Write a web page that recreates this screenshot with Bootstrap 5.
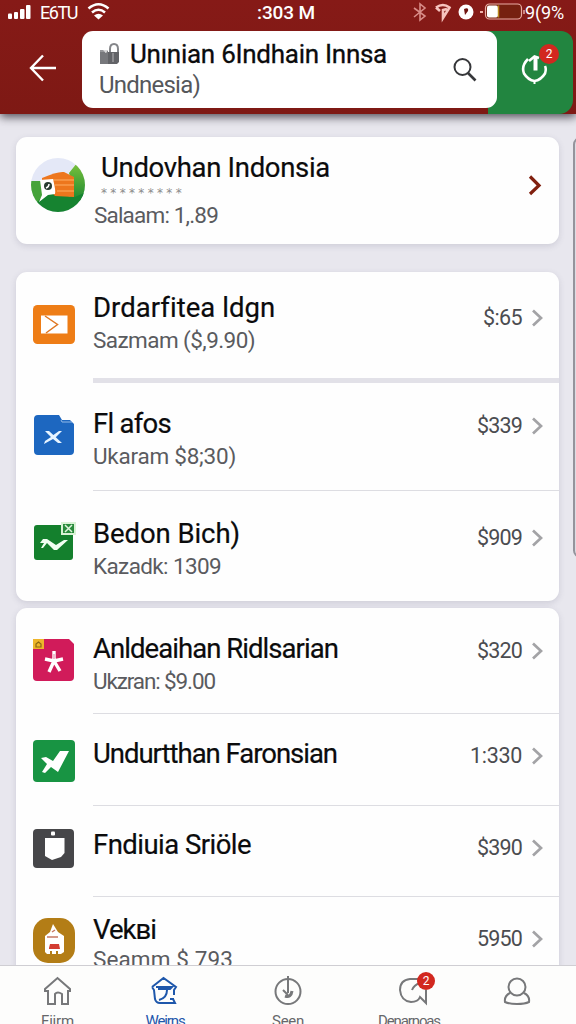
<!DOCTYPE html>
<html lang="id">
<head>
<meta charset="utf-8">
<meta name="viewport" content="width=device-width, initial-scale=1">
<title>Undovhan Indonsia</title>
<link href="https://cdn.jsdelivr.net/npm/bootstrap@5.3.0/dist/css/bootstrap.min.css" rel="stylesheet">
<style>
body{font-family:Roboto,"Liberation Sans",sans-serif;background:#e8e7ee;height:1024px;overflow:hidden;color:#0b0b0c}
svg{display:block;flex:none}
.topbar{height:114px;background:linear-gradient(#861a17,#7e1914);box-shadow:0 3px 9px rgba(30,25,35,.75);z-index:2}
.statusbar{height:31px;color:#fff;font-size:18px;line-height:25px}
.status-l{width:257px;padding-left:8px}
.status-r{padding-left:98px}
.clock{font-weight:500;font-size:19px}
.back{width:82px;height:74px;padding-left:29px}
.search{width:415px;height:77px;border-radius:11px;padding:7px 0 0 17px;z-index:1}
.search-title{font-size:26px;line-height:32px;color:#0b0b0c;margin-left:9px;-webkit-text-stroke:.3px}
.search-sub{font-size:24px;line-height:30px;color:#55575b}
.lens{left:370px;top:26px}
.refresh{width:85px;height:83px;margin-left:-9px;background:#228540;border-radius:0 12px 14px 0;padding:21px 0 0 33px}
.count{width:20px;height:20px;background:#d2281f;font-size:12px;line-height:20px;border-radius:50%;color:#fff;text-align:center}
.refresh .count{right:14px;top:13px}
.panel{width:543px;margin-left:16px;background:#fefefe;border-radius:11px;box-shadow:0 2px 6px rgba(70,70,100,.16)}
.hero{height:107px;margin-top:23px;padding:15px 16px 0 15px}
.hero-text{margin-left:8px}
.stars{font-size:12px;line-height:18px;height:18px;color:#8b8b8b;font-family:"DejaVu Sans",sans-serif}
.t-main{font-size:27.5px;line-height:32px;white-space:nowrap;-webkit-text-stroke:.2px #0b0b0c}
.t-sub{font-size:22.5px;line-height:32px;white-space:nowrap;color:#5a5b5f}
.hero .t-sub{line-height:26px}
.hero-main,.hero .stars{margin-left:7px}
.hero-chev{margin-top:22px}
.entry{padding:0 15px 0 17px}
.entry-icon{width:42px;margin-right:18px}
.price{font-size:21.5px;line-height:26px;color:#4b4c50;margin-right:9px}
.rule{height:1px;background:#dddde2;margin-left:77px}
.rule-thick{height:5px;background:#e2e1e8}
.ra{height:106px}.ra .entry-text{padding-top:20px}.ra .entry-icon{padding-top:33px}.ra .entry-end{padding-top:33px}
.rb{height:107px}.rb .entry-text{padding-top:25px}.rb .entry-icon{padding-top:32px}.rb .entry-end{padding-top:30px}
.rc{height:110px}.rc .entry-text{padding-top:27px}.rc .entry-icon{padding-top:31px}.rc .entry-end{padding-top:34px}
.rd{height:105px}.rd .entry-text{padding-top:25px}.rd .entry-icon{padding-top:31px}.rd .entry-end{padding-top:30px}
.re{height:91px}.re .entry-text{padding-top:24px}.re .entry-icon{padding-top:26px}.re .entry-end{padding-top:29px}
.rf{height:90px}.rf .entry-text{padding-top:23px}.rf .entry-icon{padding-top:23px}.rf .entry-end{padding-top:29px}
.rg{height:100px}.rg .entry-text{padding-top:17px}.rg .entry-icon{padding-top:21px}.rg .entry-end{padding-top:29px}
.rg .t-sub{line-height:26px}
.scroller{right:-12px;top:23px;width:15px;height:421px;border:2px solid #94949c;border-radius:8px;background:#dddce3}
.tabs{height:59px;background:#fdfdfc;border-top:1px solid #cfced3;z-index:2}
.tab-item{width:115px;padding-top:10px;font-size:15px;line-height:18px;color:#66676a;white-space:nowrap}
.tab-item svg{margin-bottom:6px}
.tab-item.on{width:100px;color:#1e57ab}
.tab-item.on svg{margin-right:2px}
.tab-item.mid{width:146px}
.tab-item.msgs{width:96px}
.tab-item.msgs svg{margin-left:9px}
.tab-item.me{width:119px}
.tabs .count{width:18px;height:18px;line-height:18px;left:56px;top:6px}
</style>
</head>
<body class="d-flex flex-column">
<header class="topbar position-relative flex-shrink-0">
  <div class="statusbar d-flex">
    <div class="status-l d-flex">
      <svg width="24" height="25" viewBox="0 0 24 25" fill="#fff"><rect y="13.500" width="4" height="5.500" rx="1"/><rect x="6" y="12" width="4" height="7" rx="1"/><rect x="12" y="9" width="4.500" height="10" rx="1"/><rect x="18" y="5" width="4.500" height="14" rx="1"/></svg>
      <span class="ms-2" data-w="37">E6TU</span>
      <svg class="ms-2" width="28" height="25" viewBox="0 0 28 25" fill="none" stroke="#fff" stroke-width="2.600"><path d="M3.500 8.500Q13.500 0 23.500 8.500M7 12.500Q13.500 7 20 12.500"/><path fill="#fff" stroke="none" d="M9 15.500Q13.500 12 18 15.500L13.500 19.500Z"/></svg>
    </div>
    <span class="clock" data-w="58">:303 M</span>
    <div class="status-r d-flex">
      <svg width="16" height="25" viewBox="0 0 16 25" fill="none" stroke="#d98c88" stroke-width="1.600"><path d="M1 8L12 16L7 20V4L12 8L1 17"/></svg>
      <svg width="24" height="25" viewBox="0 0 24 25" fill="none" stroke="#f6c3be" stroke-width="2.600"><path d="M7 7.500Q14 2.500 20.500 7.500L14 18V10L18 9M7 7.500L11 11"/></svg>
      <svg width="23" height="25" viewBox="0 0 23 25"><circle cx="13" cy="12" r="7.500" fill="#fff"/><path d="M11 9Q16 7 15 11L12 15Z" fill="#6f1511"/></svg>
      <svg width="49" height="25" viewBox="0 0 49 25"><path d="M4 12H7" stroke="#f0b4ac" stroke-width="2"/><rect x="9.500" y="4" width="36" height="15" rx="4" fill="#762010" stroke="#e9aaa3" stroke-width="1.200"/><rect x="11" y="5.500" width="11" height="12" rx="2" fill="#fff"/><path d="M22.500 5.500V17.500" stroke="#b88a1c" stroke-width="1.500"/><path d="M48 10V14" stroke="#e9aaa3" stroke-width="1.500"/></svg>
      <span data-w="39">9(9%</span>
    </div>
  </div>
  <div class="d-flex align-items-start">
    <div class="back d-flex align-items-center"><svg width="28" height="28" viewBox="0 0 28 28" fill="none" stroke="#fff" stroke-width="2.400"><path d="M27 14H2M14 1.500L2 14L14 26.500"/></svg></div>
    <div class="search bg-white position-relative">
      <div class="d-flex">
        <svg class="mt-1" width="22" height="26" viewBox="0 0 22 26"><path d="M11 10V7Q11 2 15 2T19 7V12" fill="none" stroke="#85868a" stroke-width="2"/><path d="M1 8H4L7 11L9 8V22H1Z" fill="#77787c"/><path d="M9 10H20V20L18 22H9Z" fill="#626367"/><path d="M14 11V20M1 9H8" stroke="#b5b5b8"/></svg>
        <span class="search-title" data-w="257">Unınian 6Indhain Innsa</span>
      </div>
      <span class="search-sub d-inline-block" data-w="101">Undnesia)</span>
      <svg class="lens position-absolute" width="26" height="26" viewBox="0 0 26 26" fill="none" stroke="#36373a" stroke-width="2"><circle cx="10.500" cy="10" r="8"/><path d="M16 16L23.500 23.500" stroke-width="2.600"/></svg>
    </div>
    <div class="refresh position-relative">
      <svg width="28" height="34" viewBox="0 0 28 34" fill="none" stroke="#fff" stroke-width="2.600"><path d="M7 7Q0 14 3 21.500Q7 28 13.500 29Q20 28 24 21.500Q25.500 17 24 14"/><path d="M14.500 5V18.500" stroke-width="4"/><path d="M8 9L13.500 4.500L18 6" /><path d="M13.500 28V32" stroke-width="2"/></svg>
      <span class="count position-absolute">2</span>
    </div>
  </div>
</header>

<main class="flex-grow-1 overflow-hidden position-relative">
  <div class="scroller position-absolute"></div>
  <section class="panel hero d-flex">
    <svg class="mt-1" width="55" height="58" viewBox="0 -1 55 58"><defs><clipPath id="disc"><circle cx="27" cy="28" r="27"/></clipPath><linearGradient id="leaf" x2="0" y2="1"><stop stop-color="#85c83c"/><stop offset="1" stop-color="#168532"/></linearGradient></defs><g clip-path="url(#disc)"><path d="M0 0H55V57H0Z" fill="#e4e8f7"/><path d="M38 16L46 6L55 2V42L38 46Q43 28 38 16Z" fill="url(#leaf)"/><path d="M0 24H12L13 42L0 52Z" fill="#45a33a"/><path d="M6 45L16 36L44 40L55 35V57H8Z" fill="#168330"/><path d="M11 21Q27 14 33 15L43 20V40L24 39L11 24Z" fill="#ed761d"/><path d="M22 23H43M24 28H43M26 34H43" stroke="#ffad64" stroke-width="1.100"/><path d="M9 23L22 22Q25 34 24 37L17 38L8 45L11 38Z" fill="#fff"/><circle cx="17" cy="29" r="4" fill="#283b31"/><path d="M15 31Q18 30 18 27" stroke="#fff" stroke-width="1.500" fill="none"/></g></svg>
    <div class="hero-text flex-grow-1">
      <div class="t-main hero-main"><span data-w="229">Undovhan Indonsia</span></div>
      <div class="stars"><span data-w="84">*********</span></div>
      <div class="t-sub"><span data-w="124">Salaam: 1,.89</span></div>
    </div>
    <svg class="hero-chev" width="16" height="22" viewBox="0 0 16 22" fill="none" stroke="#81200f" stroke-width="3.200"><path d="M3 2.500L12 11.500L3 20"/></svg>
  </section>

  <section class="panel" style="margin-top:28px">
    <div class="entry ra d-flex">
      <div class="entry-icon"><svg width="42" height="39" viewBox="0 0 42 39"><rect width="42" height="39" rx="4.500" fill="#ee7d16"/><path d="M8 10.500H34.500V28.500H8Z" fill="#fff"/><path d="M12 11L24.500 19.500L13 28" fill="none" stroke="#df7722" stroke-width="1.500"/></svg></div>
      <div class="entry-text flex-grow-1"><div class="t-main"><span data-w="181">Drdarfitea ldgn</span></div><div class="t-sub"><span data-w="162">Sazmam ($,9.90)</span></div></div>
      <div class="entry-end d-flex"><span class="price" data-w="39">$:65</span><svg width="13" height="26" viewBox="0 0 13 26"><path d="M2 5.500L10 13L2 20.500" fill="none" stroke="#a3a3a6" stroke-width="2.700"/></svg></div>
    </div>
    <div class="rule rule-thick"></div>
    <div class="entry rb d-flex">
      <div class="entry-icon"><svg width="42" height="40" viewBox="0 0 42 40"><path d="M5 0H26L29 5H37L41 9V36Q41 40 37 40H5Q1 40 1 36V4Q1 0 5 0Z" fill="#1d67c0"/><path d="M28 5L29 7H39" fill="none" stroke="#91b9e7"/><path d="M12 16H16L29 28H25L20 24L11 29L12 26L18 22ZM19 21L26 16H29L21 24Z" fill="#e7f4ff"/></svg></div>
      <div class="entry-text flex-grow-1"><div class="t-main"><span data-w="78">Fl afos</span></div><div class="t-sub"><span data-w="143">Ukaram $8;30)</span></div></div>
      <div class="entry-end d-flex"><span class="price" data-w="45">$339</span><svg width="13" height="26" viewBox="0 0 13 26"><path d="M2 5.500L10 13L2 20.500" fill="none" stroke="#a3a3a6" stroke-width="2.700"/></svg></div>
    </div>
    <div class="rule"></div>
    <div class="entry rc d-flex">
      <div class="entry-icon"><svg width="44" height="39" viewBox="0 0 44 39"><rect x="1" y="3" width="39" height="35" rx="3" fill="#14802d"/><path d="M28 0H43V13H28Z" fill="#d9f2d5"/><path d="M30 2H41V11H30Z" fill="#298b3c"/><path d="M32 3L39 10M39 3L32 10" stroke="#dff4dc" stroke-width="1.500"/><path d="M7 21L10 17H14L23 23L31 18L35 18L24 28H21L14 21L10 26H8L11 21Z" fill="#f0fff1"/></svg></div>
      <div class="entry-text flex-grow-1"><div class="t-main"><span data-w="147">Bedon Bich)</span></div><div class="t-sub"><span data-w="128">Kazadk: 1309</span></div></div>
      <div class="entry-end d-flex"><span class="price" data-w="45">$909</span><svg width="13" height="26" viewBox="0 0 13 26"><path d="M2 5.500L10 13L2 20.500" fill="none" stroke="#a3a3a6" stroke-width="2.700"/></svg></div>
    </div>
  </section>

  <section class="panel" style="margin-top:7px">
    <div class="entry rd d-flex">
      <div class="entry-icon"><svg width="42" height="42" viewBox="0 0 42 42"><path d="M5 0H36L41 5V38Q41 42 37 42H4Q0 42 0 38V5Z" fill="#d11b5a"/><path d="M0 0H11V10H0Z" fill="#eeb52b"/><path d="M3 8V5L5.500 3L8 5V8Z" fill="none" stroke="#8b6812" stroke-width="1.200"/><path d="M21 12V22M21 22L12 20M21 22L30 20M21 22L16 33M21 22L27 32" stroke="#fff" stroke-width="3.400"/><path d="M21 15V20" stroke="#df7c9d"/></svg></div>
      <div class="entry-text flex-grow-1"><div class="t-main"><span data-w="245">Anldeaihan Ridlsarian</span></div><div class="t-sub"><span data-w="122">Ukzran: $9.00</span></div></div>
      <div class="entry-end d-flex"><span class="price" data-w="45">$320</span><svg width="13" height="26" viewBox="0 0 13 26"><path d="M2 5.500L10 13L2 20.500" fill="none" stroke="#a3a3a6" stroke-width="2.700"/></svg></div>
    </div>
    <div class="rule"></div>
    <div class="entry re d-flex">
      <div class="entry-icon"><svg width="42" height="42" viewBox="0 0 42 42"><rect width="42" height="42" rx="4" fill="#189443"/><path d="M8 18L13 17L20 21L27 11L36 11L25 32L18 27L12 33L9 32L14 24Z" fill="#fff"/></svg></div>
      <div class="entry-text flex-grow-1"><div class="t-main"><span data-w="244">Undurtthan Faronsian</span></div></div>
      <div class="entry-end d-flex"><span class="price" data-w="52">1:330</span><svg width="13" height="26" viewBox="0 0 13 26"><path d="M2 5.500L10 13L2 20.500" fill="none" stroke="#a3a3a6" stroke-width="2.700"/></svg></div>
    </div>
    <div class="rule"></div>
    <div class="entry rf d-flex">
      <div class="entry-icon"><svg width="42" height="39" viewBox="0 0 42 39"><rect width="41" height="39" rx="4" fill="#464649"/><path d="M12 9H31.500V24L28 28L19 31L12 27Z" fill="#fff"/><rect x="18" y="2.500" width="4" height="4" rx="1" fill="#fff"/></svg></div>
      <div class="entry-text flex-grow-1"><div class="t-main"><span data-w="158">Fndiuia Sriöle</span></div></div>
      <div class="entry-end d-flex"><span class="price" data-w="45">$390</span><svg width="13" height="26" viewBox="0 0 13 26"><path d="M2 5.500L10 13L2 20.500" fill="none" stroke="#a3a3a6" stroke-width="2.700"/></svg></div>
    </div>
    <div class="rule"></div>
    <div class="entry rg d-flex">
      <div class="entry-icon"><svg width="42" height="45" viewBox="0 0 42 45"><rect width="42" height="45" rx="15" fill="#b37d16"/><path d="M20 6L25 14L31 18V34L28 36H14L12 34V18L17 14Z" fill="#fff"/><path d="M14 19H25M19 14L22 12" stroke="#c67863" stroke-width="1.500"/><path d="M16 30L17 26H26L27 31H16Z" fill="#d33c32"/><path d="M18 36V33M24 36V33" stroke="#b37d16" stroke-width="2"/></svg></div>
      <div class="entry-text flex-grow-1"><div class="t-main"><span data-w="63">Vekвi</span></div><div class="t-sub"><span data-w="140">Seamm $ 793</span></div></div>
      <div class="entry-end d-flex"><span class="price" data-w="45">5950</span><svg width="13" height="26" viewBox="0 0 13 26"><path d="M2 5.500L10 13L2 20.500" fill="none" stroke="#a3a3a6" stroke-width="2.700"/></svg></div>
    </div>
  </section>
</main>

<nav class="tabs d-flex flex-shrink-0 position-relative overflow-hidden">
  <div class="tab-item d-flex flex-column align-items-center"><svg width="30" height="30" viewBox="0 0 30 30" fill="none" stroke="#77787a" stroke-width="2"><path d="M2 13L14.500 2L27 13V15H25V28H19V18Q14.500 15 12 18V28H5V15H2Z"/></svg><span data-w="33">Fiirm</span></div>
  <div class="tab-item on d-flex flex-column align-items-center"><svg width="30" height="30" viewBox="0 0 30 30" fill="none" stroke="#1e57ab" stroke-width="2"><path d="M3 11L14.500 2L27 11L25 14V19M3 11L5 14L6 23Q7 27 11 27H26L24 23M7 11H23L21 13H9M18 14Q18 22 10 24M21 23H25"/></svg><span data-w="39">Weirns</span></div>
  <div class="tab-item mid d-flex flex-column align-items-center"><svg width="30" height="30" viewBox="0 0 30 30" fill="none" stroke="#77787a" stroke-width="2"><circle cx="15" cy="15.500" r="12.500"/><path d="M15 0V17M10 14L15 19"/><path d="M12 20Q18 22 19 15" stroke-width="3"/></svg><span data-w="32">Seen</span></div>
  <div class="tab-item msgs d-flex flex-column align-items-center position-relative"><svg width="32" height="30" viewBox="0 0 32 30" fill="none" stroke="#77787a" stroke-width="2"><path d="M20 3H12Q2 4 2 14Q3 25 13 26Q20 26 22 21L28 27V14M14 14Q16 9 22 7"/></svg><span data-w="62">Denarnoas</span><span class="count position-absolute">2</span></div>
  <div class="tab-item me d-flex flex-column align-items-center"><svg width="30" height="30" viewBox="0 0 30 30" fill="none" stroke="#77787a" stroke-width="2"><circle cx="15" cy="11" r="8.500"/><path d="M8 17Q2 20 3 26Q7 28 15 28T27 26Q28 20 22 17"/></svg></div>
</nav>
<script src="https://cdn.jsdelivr.net/npm/bootstrap@5.3.0/dist/js/bootstrap.bundle.min.js"></script>
<script>
/* Tracks each label out or in to its nominal width. */
document.querySelectorAll('[data-w]').forEach(function (el) {
  var gap = (el.dataset.w - el.getBoundingClientRect().width) / el.textContent.length;
  el.style.letterSpacing = gap + 'px';
});
</script>
</body>
</html>
